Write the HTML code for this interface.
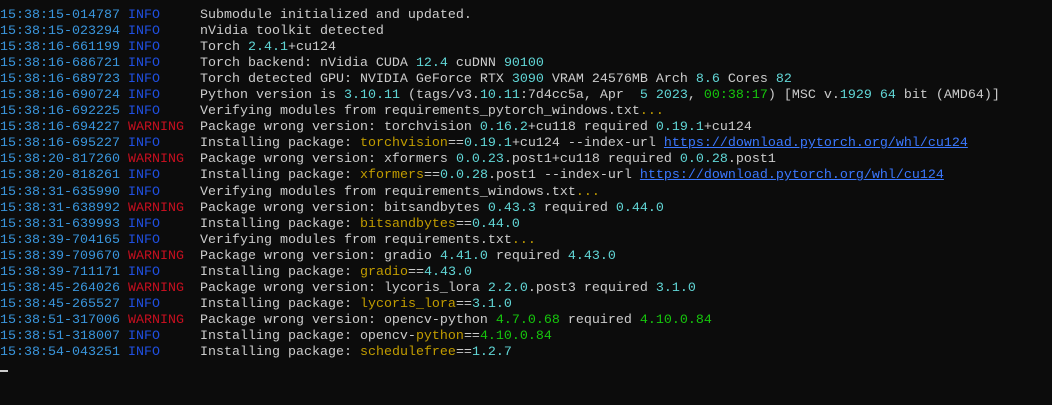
<!DOCTYPE html>
<html><head><meta charset="utf-8"><style>
html,body{margin:0;padding:0;background:#0c0c0c;width:1052px;height:405px;overflow:hidden}
#t{padding-top:7.5px;font-family:"Liberation Mono",monospace;font-size:13.33px;color:#cccccc}
#t div{height:16.1px;line-height:16.1px;overflow:hidden;white-space:pre}
.d{color:#3a96dd}.i{color:#1f4fe0}.w{color:#c50f1f}.c{color:#61d6d6}.y{color:#c19c00}.g{color:#16c60c}.u{color:#3b78ff;text-decoration:underline}
.cur{position:absolute;left:0;top:370px;width:8px;height:2px;background:#cccccc}
</style></head><body><div id="t">
<div><span class="d">15:38:15-014787</span> <span class="i">INFO</span>     Submodule initialized and updated.</div>
<div><span class="d">15:38:15-023294</span> <span class="i">INFO</span>     nVidia toolkit detected</div>
<div><span class="d">15:38:16-661199</span> <span class="i">INFO</span>     Torch <span class="c">2.4.1</span>+cu124</div>
<div><span class="d">15:38:16-686721</span> <span class="i">INFO</span>     Torch backend: nVidia CUDA <span class="c">12.4</span> cuDNN <span class="c">90100</span></div>
<div><span class="d">15:38:16-689723</span> <span class="i">INFO</span>     Torch detected GPU: NVIDIA GeForce RTX <span class="c">3090</span> VRAM 24576MB Arch <span class="c">8.6</span> Cores <span class="c">82</span></div>
<div><span class="d">15:38:16-690724</span> <span class="i">INFO</span>     Python version is <span class="c">3.10.11</span> (tags/v3.<span class="c">10.11</span>:7d4cc5a, Apr  <span class="c">5 2023</span>, <span class="g">00:38:17</span>) [MSC v.<span class="c">1929 64</span> bit (AMD64)]</div>
<div><span class="d">15:38:16-692225</span> <span class="i">INFO</span>     Verifying modules from requirements_pytorch_windows.txt<span class="y">...</span></div>
<div><span class="d">15:38:16-694227</span> <span class="w">WARNING</span>  Package wrong version: torchvision <span class="c">0.16.2</span>+cu118 required <span class="c">0.19.1</span>+cu124</div>
<div><span class="d">15:38:16-695227</span> <span class="i">INFO</span>     Installing package: <span class="y">torchvision</span>==<span class="c">0.19.1</span>+cu124 --index-url <span class="u">https://download.pytorch.org/whl/cu124</span></div>
<div><span class="d">15:38:20-817260</span> <span class="w">WARNING</span>  Package wrong version: xformers <span class="c">0.0.23</span>.post1+cu118 required <span class="c">0.0.28</span>.post1</div>
<div><span class="d">15:38:20-818261</span> <span class="i">INFO</span>     Installing package: <span class="y">xformers</span>==<span class="c">0.0.28</span>.post1 --index-url <span class="u">https://download.pytorch.org/whl/cu124</span></div>
<div><span class="d">15:38:31-635990</span> <span class="i">INFO</span>     Verifying modules from requirements_windows.txt<span class="y">...</span></div>
<div><span class="d">15:38:31-638992</span> <span class="w">WARNING</span>  Package wrong version: bitsandbytes <span class="c">0.43.3</span> required <span class="c">0.44.0</span></div>
<div><span class="d">15:38:31-639993</span> <span class="i">INFO</span>     Installing package: <span class="y">bitsandbytes</span>==<span class="c">0.44.0</span></div>
<div><span class="d">15:38:39-704165</span> <span class="i">INFO</span>     Verifying modules from requirements.txt<span class="y">...</span></div>
<div><span class="d">15:38:39-709670</span> <span class="w">WARNING</span>  Package wrong version: gradio <span class="c">4.41.0</span> required <span class="c">4.43.0</span></div>
<div><span class="d">15:38:39-711171</span> <span class="i">INFO</span>     Installing package: <span class="y">gradio</span>==<span class="c">4.43.0</span></div>
<div><span class="d">15:38:45-264026</span> <span class="w">WARNING</span>  Package wrong version: lycoris_lora <span class="c">2.2.0</span>.post3 required <span class="c">3.1.0</span></div>
<div><span class="d">15:38:45-265527</span> <span class="i">INFO</span>     Installing package: <span class="y">lycoris_lora</span>==<span class="c">3.1.0</span></div>
<div><span class="d">15:38:51-317006</span> <span class="w">WARNING</span>  Package wrong version: opencv-python <span class="g">4.7.0.68</span> required <span class="g">4.10.0.84</span></div>
<div><span class="d">15:38:51-318007</span> <span class="i">INFO</span>     Installing package: opencv-<span class="y">python</span>==<span class="g">4.10.0.84</span></div>
<div><span class="d">15:38:54-043251</span> <span class="i">INFO</span>     Installing package: <span class="y">schedulefree</span>==<span class="c">1.2.7</span></div>
</div>
<div class="cur"></div></body></html>
